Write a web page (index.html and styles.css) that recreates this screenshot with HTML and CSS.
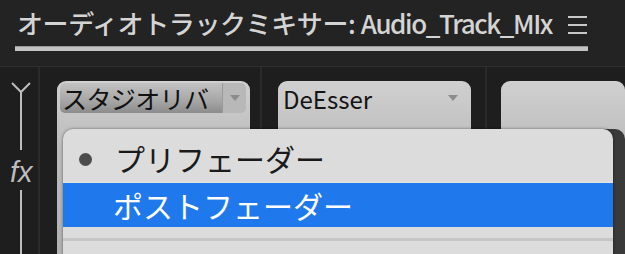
FILE: index.html
```html
<!DOCTYPE html>
<html lang="ja">
<head>
    <meta charset="UTF-8">
    <title>オーディオトラックミキサー</title>
<link rel="stylesheet" href="styles.css">
</head>
<body>
    <div class="panel">
        <div class="header">
            <div class="title-row">
                <h1 class="title">オーディオトラックミキサー: <span class="latin">Audio_Track_MIx</span></h1>
                <svg class="menu-icon" width="20" height="19" viewBox="0 0 20 19">
                    <rect x="0" y="1" width="19" height="2" fill="#c8c8c8"/>
                    <rect x="0" y="9" width="19" height="2" fill="#c8c8c8"/>
                    <rect x="0" y="17" width="19" height="2" fill="#c8c8c8"/>
                </svg>
            </div>
            <div class="tab-bar"></div>
        </div>

        <div class="mixer">
            <div class="fx-col">
                <svg class="fx-line" width="38" height="187" viewBox="0 0 38 187">
                    <path d="M12 16 L21 25 L30 16" stroke="#bdbdbd" stroke-width="2" fill="none"/>
                    <line x1="21" y1="25" x2="21" y2="83" stroke="#bdbdbd" stroke-width="2"/>
                    <line x1="21" y1="123" x2="21" y2="187" stroke="#bdbdbd" stroke-width="2"/>
                </svg>
                <span class="fx-label">fx</span>
            </div>
            <div class="slot-col first">
                <div class="slot">
                    <div class="dropdown">
                        <span class="dropdown-text">スタジオリバ</span>
                        <span class="dropdown-arrow"><i class="tri"></i></span>
                    </div>
                </div>
            </div>
            <div class="slot-col second">
                <div class="slot">
                    <div class="plain-select">
                        <span>DeEsser</span>
                        <i class="tri"></i>
                    </div>
                </div>
            </div>
            <div class="slot-col third">
                <div class="slot"></div>
            </div>

            <!-- ポップアップメニュー -->
            <div class="popup">
                <div class="item">
                    <i class="bullet"></i>
                    <span>プリフェーダー</span>
                </div>
                <div class="item selected">
                    <span>ポストフェーダー</span>
                </div>
                <div class="item-gap"></div>
                <div class="separator"></div>
            </div>
        </div>
    </div>
</body>
</html>
```

FILE: styles.css
```css
body {
    margin: 0;
    background-color: #232323;
    font-family: "Noto Sans CJK JP", "Noto Sans", sans-serif;
    overflow: hidden;
}
.panel {
    width: 625px;
    height: 254px;
}
.header {
    height: 66px;
    border-bottom: 1px solid #2f2f2f;
    box-sizing: content-box;
}
.title-row {
    display: flex;
    align-items: flex-start;
    padding-top: 9px;
    padding-left: 17px;
    height: 37px;
}
.title {
    margin: 0;
    font-size: 26px;
    line-height: 28px;
    font-weight: 500;
    color: #d4d4d4;
    letter-spacing: -0.4px;
    white-space: nowrap;
    width: 551px;
}
.latin {
    letter-spacing: -1.4px;
}
.menu-icon {
    margin-top: 6px;
}
.tab-bar {
    margin-left: 15px;
    width: 573px;
    height: 5px;
    background-color: #c3c3c3;
    border-top: 1px solid #9a9a9a;
    box-sizing: border-box;
}
.mixer {
    position: relative;
    display: flex;
    height: 187px;
    background-color: #1e1e1e;
}
.fx-col {
    position: relative;
    width: 38px;
    border-right: 2px solid #2a2a2a;
}
.fx-line {
    display: block;
}
.fx-label {
    position: absolute;
    left: 10px;
    top: 88px;
    font-family: "Liberation Sans", sans-serif;
    font-style: italic;
    font-size: 29px;
    line-height: 34px;
    color: #bdbdbd;
}
.slot-col {
    padding-top: 14px;
    border-right: 2px solid #2a2a2a;
}
.slot-col.first {
    width: 222px;
    padding-left: 17px;
    box-sizing: border-box;
}
.slot-col.second {
    width: 225px;
    padding-left: 16px;
    box-sizing: border-box;
}
.slot-col.third {
    flex: 1;
    padding-left: 14px;
    border-right: none;
}
.slot {
    height: 100%;
    border-radius: 9px 9px 0 0;
    background: linear-gradient(#d0d0d0, #bcbcbc 40%, #b2b2b2);
    padding: 2px 3px;
    box-sizing: border-box;
}
.first .slot {
    width: 193px;
}
.second .slot {
    width: 193px;
}
.dropdown {
    display: flex;
    height: 30px;
}
.dropdown-text {
    display: flex;
    align-items: center;
    width: 162px;
    padding-left: 2px;
    box-sizing: border-box;
    font-size: 25px;
    color: #111;
    letter-spacing: -0.6px;
    background: linear-gradient(#c2c2c2, #a6a6a6 60%, #8c8c8c);
    border-radius: 5px 0 0 5px;
    white-space: nowrap;
}
.dropdown-arrow {
    display: flex;
    align-items: center;
    justify-content: center;
    width: 23px;
    background-color: #b8b8b8;
    border-left: 1px solid #999;
    border-radius: 0 5px 5px 0;
}
.tri {
    display: block;
    width: 0;
    height: 0;
    border-left: 5px solid transparent;
    border-right: 5px solid transparent;
    border-top: 6px solid #8c8c8c;
}
.plain-select {
    display: flex;
    align-items: center;
    justify-content: space-between;
    height: 30px;
    padding: 0 10px 0 2px;
    font-size: 24px;
    color: #141414;
}
.popup {
    position: absolute;
    left: 63px;
    top: 62px;
    width: 550px;
    height: 130px;
    background-color: #dcdcdc;
    border-radius: 10px 10px 0 0;
    box-shadow: 0 0 3px rgba(0, 0, 0, 0.5), 12px 0 0 #3a3a3a;
}
.item {
    position: relative;
    display: flex;
    align-items: center;
    height: 53px;
    padding-left: 52px;
    padding-top: 4px;
    box-sizing: border-box;
    font-size: 30px;
    color: #1a1a1a;
}
.bullet {
    position: absolute;
    left: 16px;
    top: 24px;
    width: 13px;
    height: 13px;
    border-radius: 50%;
    background-color: #4c4c4c;
}
.item.selected {
    height: 45px;
    padding-left: 50px;
    padding-top: 0;
    background-color: #2079ec;
    border-top: 1px solid #e4e4e4;
    color: #fff;
}
.item-gap {
    height: 11px;
}
.separator {
    height: 3px;
    background-color: #c6c6c6;
}
```
